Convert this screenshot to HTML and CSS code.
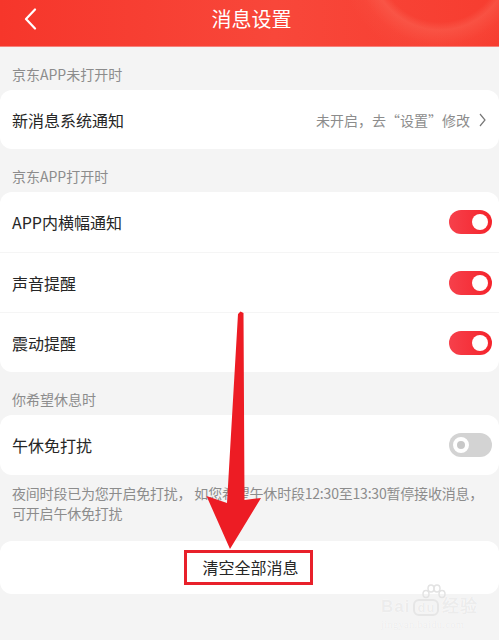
FILE: index.html
```html
<!DOCTYPE html>
<html lang="zh-CN">
<head>
    <meta charset="UTF-8">
    <meta name="viewport" content="width=device-width, initial-scale=1.0">
    <title>消息设置</title>
    <link rel="stylesheet" href="styles.css">
</head>
<body>

    <div class="page">
        <!-- Header -->
        <div class="header">
            <svg class="back" width="14" height="22" viewBox="0 0 14 22">
                <polyline points="11,1.5 2,11 11,20.5" fill="none" stroke="#fff" stroke-width="2.2" stroke-linejoin="round" stroke-linecap="round"/>
            </svg>
            <div class="title">消息设置</div>
        </div>

        <div class="section-label">京东APP未打开时</div>
        <div class="card">
            <div class="row single">
                <span class="row-title">新消息系统通知</span>
                <span class="row-extra">
                    未开启，去“设置”修改
                    <svg class="chevron" width="7" height="14" viewBox="0 0 7 14">
                        <polyline points="1,1 6,7 1,13" fill="none" stroke="#777" stroke-width="1.2"/>
                    </svg>
                </span>
            </div>
        </div>

        <div class="section-label">京东APP打开时</div>
        <div class="card">
            <div class="row">
                <span class="row-title">APP内横幅通知</span>
                <span class="switch on"><span class="knob"></span></span>
            </div>
            <div class="row">
                <span class="row-title">声音提醒</span>
                <span class="switch on"><span class="knob"></span></span>
            </div>
            <div class="row">
                <span class="row-title">震动提醒</span>
                <span class="switch on"><span class="knob"></span></span>
            </div>
        </div>

        <div class="section-label">你希望休息时</div>
        <div class="card">
            <div class="row">
                <span class="row-title">午休免打扰</span>
                <span class="switch off"><span class="knob"></span></span>
            </div>
        </div>
        <div class="note">夜间时段已为您开启免打扰， 如您希望午休时段12:30至13:30暂停接收消息，<br>可开启午休免打扰</div>

        <div class="card clear-card">
            <span class="clear-btn">清空全部消息</span>
        </div>

        <!-- Watermark -->
        <div class="watermark">
            <svg class="wm-paw" width="26" height="16" viewBox="0 0 26 16">
                <g fill="none" stroke="#e3e3e3" stroke-width="1.5">
                    <ellipse cx="5" cy="10" rx="3" ry="3.5"/>
                    <ellipse cx="10" cy="4.5" rx="3" ry="3.5"/>
                    <ellipse cx="16" cy="4.5" rx="3" ry="3.5"/>
                    <ellipse cx="21" cy="10" rx="3" ry="3.5"/>
                </g>
            </svg>
            <div class="wm-logo">Bai<span class="wm-du">du</span>经验</div>
            <div class="wm-url">jingyan.baidu.com</div>
        </div>

        <!-- Annotation arrow -->
        <svg class="arrow" width="499" height="640" viewBox="0 0 499 640">
            <polygon points="238,314 240.5,311.5 243.5,313 244.5,500 261,498 230,549 206.5,496 227,503" fill="#ed1c24"/>
        </svg>
    </div>

</body>
</html>
```

FILE: styles.css
```css
body {
    margin: 0;
    font-family: "Noto Sans CJK SC", "Noto Sans", sans-serif;
    background-color: #f4f4f4;
    color: #333;
}
.page {
    position: relative;
    width: 499px;
    height: 640px;
    overflow: hidden;
    background: #f4f4f4;
}
.header {
    height: 38px;
    padding-bottom: 8px;
    border-bottom: 1px solid #f6817a;
    display: flex;
    align-items: center;
    justify-content: center;
    position: relative;
    background:
        radial-gradient(circle at 440px -40px, rgba(255, 140, 120, 0) 0, rgba(255, 140, 120, 0) 62px, rgba(255, 150, 130, 0.22) 70px, rgba(255, 120, 100, 0.08) 85px, rgba(255, 120, 100, 0) 100px),
        linear-gradient(90deg, #f6362b 0%, #f8473a 55%, #f73d30 100%);
}
.back {
    position: absolute;
    left: 24px;
    top: 8px;
}
.title {
    color: #fff;
    font-size: 20px;
    line-height: 26px;
    margin-left: 4px;
}
.section-label {
    font-size: 14px;
    line-height: 20px;
    color: #8c8c8c;
    padding: 17px 12px 6px;
}
.card {
    background: #fff;
    border-radius: 12px;
}
.row {
    height: 60px;
    display: flex;
    align-items: center;
    justify-content: space-between;
    padding: 0 7px 0 12px;
}
.row.single {
    height: 59px;
}
.row + .row {
    border-top: 1px solid #f5f5f5;
    height: 59px;
}
.row-title {
    font-size: 16px;
    color: #262626;
}
.row-extra {
    display: flex;
    align-items: center;
    font-size: 14px;
    color: #8c8c8c;
    margin-right: 6px;
}
.chevron {
    margin-left: 9px;
}
.switch {
    width: 43px;
    height: 24px;
    border-radius: 12px;
    display: flex;
    align-items: center;
    padding: 0 4px;
    box-sizing: border-box;
}
.switch.on {
    background: linear-gradient(90deg, #f6404b, #f5242c);
    justify-content: flex-end;
}
.switch.off {
    background: #d3d3d3;
    justify-content: flex-start;
}
.knob {
    width: 16px;
    height: 16px;
    border-radius: 50%;
    background: #fff;
    box-sizing: border-box;
}
.switch.off .knob {
    border: 4px solid #fff;
    background: #c8c8c8;
}
.note {
    font-size: 14px;
    line-height: 20px;
    color: #8c8c8c;
    padding: 8px 12px 18px;
    white-space: nowrap;
    letter-spacing: -0.2px;
}
.clear-card {
    height: 53px;
    display: flex;
    align-items: center;
    justify-content: center;
}
.clear-btn {
    font-size: 16px;
    line-height: 29px;
    color: #262626;
    border: 3px solid #e8202a;
    padding: 0 11px 0 15px;
    margin-right: 2px;
}
.watermark {
    position: absolute;
    left: 381px;
    top: 584px;
    color: #ececec;
    text-shadow: 0 0 1px #fff, 0 0 1px #fff;
}
.wm-paw {
    display: block;
    margin-left: 40px;
    margin-bottom: -3px;
}
.wm-logo {
    font-family: "Liberation Sans", sans-serif;
    font-size: 17px;
    font-weight: bold;
    line-height: 20px;
    letter-spacing: 1px;
}
.wm-du {
    display: inline-block;
    border: 2px solid #e6e6e6;
    border-radius: 6px;
    font-size: 13px;
    line-height: 13px;
    padding: 0 2px;
    margin: 0 3px;
}
.wm-url {
    font-family: "Liberation Serif", serif;
    font-size: 10.5px;
    line-height: 12px;
    letter-spacing: 0.3px;
    margin-top: 2px;
}
.arrow {
    position: absolute;
    left: 0;
    top: 0;
    pointer-events: none;
}
```
